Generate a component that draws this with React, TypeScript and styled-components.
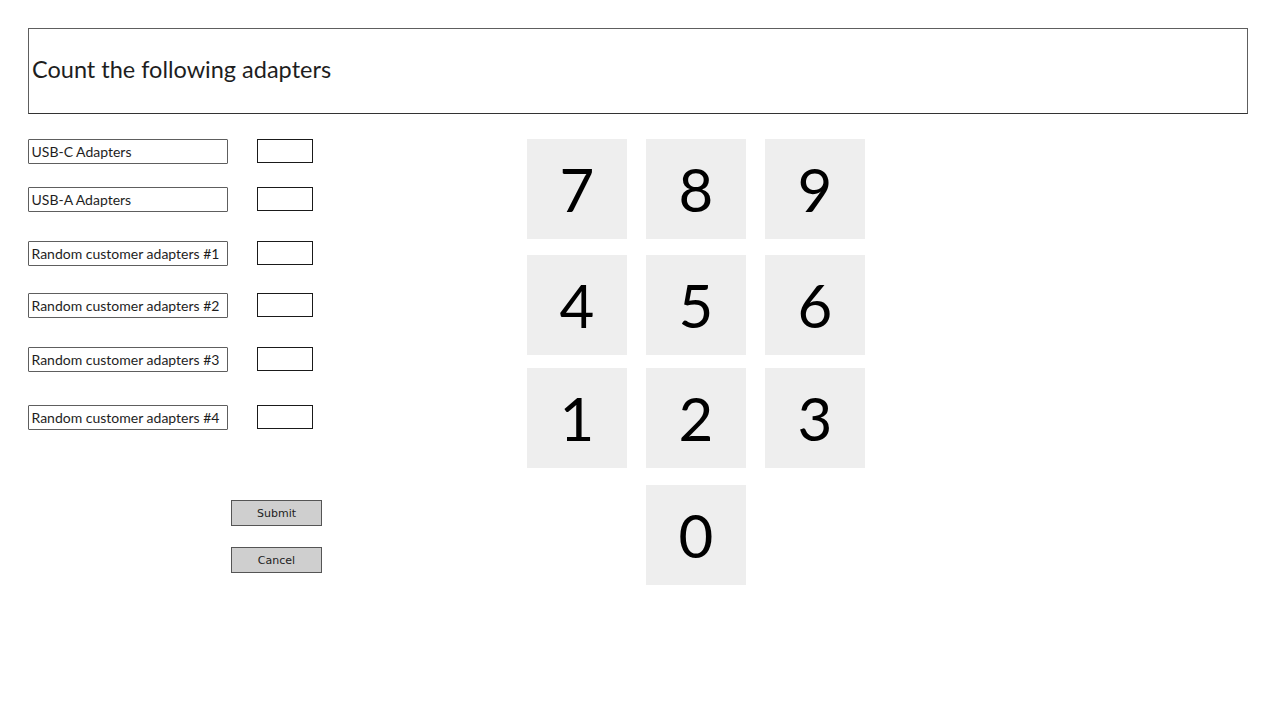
import styled, { createGlobalStyle } from 'styled-components';

const GlobalStyle = createGlobalStyle`
  body {
    margin: 0;
    background: #ffffff;
    font-family: Lato, "Noto Sans", sans-serif;
    color: #1e1e1e;
  }
`;

const rows = [
  { label: 'USB-C Adapters', gap: 0 },
  { label: 'USB-A Adapters', gap: 23 },
  { label: 'Random customer adapters #1', gap: 29 },
  { label: 'Random customer adapters #2', gap: 27 },
  { label: 'Random customer adapters #3', gap: 29 },
  { label: 'Random customer adapters #4', gap: 33 },
];

const keyRows = [
  { keys: ['7', '8', '9'], gap: 0 },
  { keys: ['4', '5', '6'], gap: 16 },
  { keys: ['1', '2', '3'], gap: 13 },
  { keys: ['', '0', ''], gap: 17 },
];

export default function App() {
  return (
    <Page>
      <GlobalStyle />
      <Header>Count the following adapters</Header>
      <Content>
        <Form>
          {rows.map(row => (
            <Row key={row.label} $gap={row.gap}>
              <Label>{row.label}</Label>
              <CountInput />
            </Row>
          ))}
          <Actions>
            <Button>Submit</Button>
            <Button>Cancel</Button>
          </Actions>
        </Form>
        <Keypad>
          {keyRows.map((row, i) => (
            <KeyRow key={i} $gap={row.gap}>
              {row.keys.map((k, j) =>
                k ? <Key key={j}>{k}</Key> : <KeySpacer key={j} />
              )}
            </KeyRow>
          ))}
        </Keypad>
      </Content>
    </Page>
  );
}

const Page = styled.div`
  padding: 28px 32px 0 28px;
`;

const Header = styled.div`
  height: 86px;
  box-sizing: border-box;
  display: flex;
  align-items: center;
  padding: 0 0 5px 3px;
  border: 1.5px solid #5e5e5e;
  border-bottom-color: #333;
  font-size: 23.5px;
  color: #1e1e1e;
`;

const Content = styled.div`
  display: flex;
  margin-top: 25px;
`;

const Form = styled.div`
  width: 499px;
  display: flex;
  flex-direction: column;
`;

const Row = styled.div<{ $gap: number }>`
  display: flex;
  align-items: flex-start;
  gap: 29px;
  margin-top: ${p => p.$gap}px;
`;

const Label = styled.div`
  width: 200px;
  height: 25px;
  box-sizing: border-box;
  border: 1.5px solid #5e5e5e;
  border-radius: 1px;
  padding: 0 0 0 2.5px;
  display: flex;
  align-items: center;
  font-size: 14px;
  color: #1e1e1e;
`;

const CountInput = styled.div`
  width: 56px;
  height: 24px;
  box-sizing: border-box;
  border: 1px solid #1a1a1a;
  background: #fff;
`;

const Actions = styled.div`
  display: flex;
  flex-direction: column;
  gap: 21px;
  margin: 70px 0 0 203px;
`;

const Button = styled.div`
  width: 91px;
  height: 26px;
  box-sizing: border-box;
  background: #cfcfcf;
  border: 1.5px solid #555;
  display: flex;
  align-items: center;
  justify-content: center;
  font-family: "DejaVu Sans", sans-serif;
  font-size: 11px;
  color: #222;
`;

const Keypad = styled.div`
  display: flex;
  flex-direction: column;
`;

const KeyRow = styled.div<{ $gap: number }>`
  display: flex;
  gap: 19px;
  margin-top: ${p => p.$gap}px;
`;

const Key = styled.div`
  width: 100px;
  height: 100px;
  background: #eeeeee;
  display: flex;
  align-items: center;
  justify-content: center;
  font-size: 60px;
  color: #000;
`;

const KeySpacer = styled.div`
  width: 100px;
  height: 100px;
`;
